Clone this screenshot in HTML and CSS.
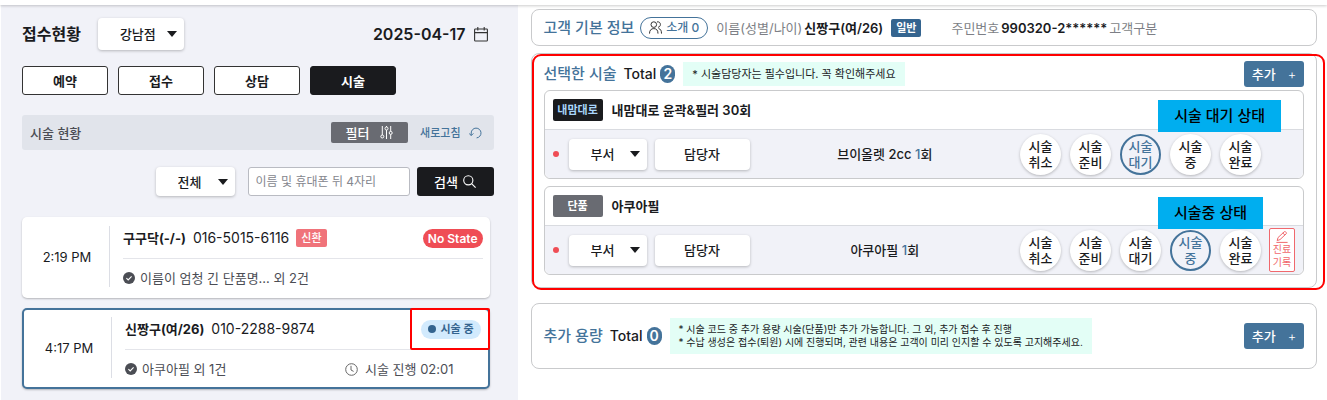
FILE: index.html
```html
<!DOCTYPE html>
<html lang="ko">
<head>
  <meta charset="UTF-8">
  <meta name="viewport" content="width=device-width, initial-scale=1.0">
  <title>접수현황</title>
  <link rel="stylesheet" href="styles.css">
</head>
<body>
  <header class="top-bar"></header>
  <main class="page">
    <aside class="reception">
      <div class="reception-head">
        <h1>접수현황</h1>
        <div class="select-box branch">
          <select aria-label="지점"><option>강남점</option></select>
        </div>
        <button class="date" type="button">
          <span>2025-04-17</span>
          <svg width="14" height="15" viewBox="0 0 14 15" fill="none" stroke="#333" stroke-width="1.1"><rect x="0.6" y="2" width="12.8" height="12" rx="0.8"/><path d="M0.6 5.6h12.8M3.8 0v3.6M10.2 0v3.6"/></svg>
        </button>
      </div>

      <nav class="tabs">
        <button type="button">예약</button>
        <button type="button">접수</button>
        <button type="button">상담</button>
        <button type="button" class="active">시술</button>
      </nav>

      <div class="status-bar">
        <h2>시술 현황</h2>
        <button class="filter" type="button">필터
          <svg width="13" height="13" viewBox="0 0 13 13" fill="none" stroke="#fff" stroke-width="1"><path d="M2.3 0v9M6.5 4v9M10.7 0v5.4M10.7 8.4v4.6M6.5 0v1"/><circle cx="2.3" cy="10.5" r="1.5"/><circle cx="6.5" cy="2.5" r="1.5"/><circle cx="10.7" cy="6.9" r="1.5"/></svg>
        </button>
        <button class="refresh" type="button">새로고침
          <svg width="13" height="12" viewBox="0 0 13 12" fill="none" stroke="#44739a" stroke-width="1"><path d="M2.2 8.4V6a4.9 4.9 0 1 1 5.4 4.9M0.2 6.4l2 2.2 2.2-2.2"/></svg>
        </button>
      </div>

      <form class="search">
        <div class="select-box kind">
          <select aria-label="구분"><option>전체</option></select>
        </div>
        <input type="text" aria-label="검색어" placeholder="이름 및 휴대폰 뒤 4자리">
        <button type="button">검색
          <svg width="13" height="13" viewBox="0 0 13 13" fill="none" stroke="#fff" stroke-width="1.1"><circle cx="5.3" cy="5.3" r="4.6"/><path d="M8.6 8.6l4 4"/></svg>
        </button>
      </form>

      <ul class="patients">
        <li class="patient">
          <time>2:19 PM</time>
          <div class="patient-body">
            <div class="patient-top">
              <strong>구구닥(-/-)</strong>
              <span class="phone">016-5015-6116</span>
              <em class="new">신환</em>
              <span class="state none">No State</span>
            </div>
            <div class="patient-bottom">
              <svg width="12" height="12" viewBox="0 0 12 12"><circle cx="6" cy="6" r="6" fill="#4b4d54"/><path d="M3.4 6.1l1.8 1.8 3.4-3.5" fill="none" stroke="#fff" stroke-width="1.1"/></svg>
              <span>이름이 엄청 긴 단품명... 외 2건</span>
            </div>
          </div>
        </li>
        <li class="patient selected">
          <time>4:17 PM</time>
          <div class="patient-body">
            <div class="patient-top">
              <strong>신짱구(여/26)</strong>
              <span class="phone">010-2288-9874</span>
              <span class="state doing">시술 중</span>
            </div>
            <div class="patient-bottom">
              <svg width="12" height="12" viewBox="0 0 12 12"><circle cx="6" cy="6" r="6" fill="#4b4d54"/><path d="M3.4 6.1l1.8 1.8 3.4-3.5" fill="none" stroke="#fff" stroke-width="1.1"/></svg>
              <span>아쿠아필 외 1건</span>
              <span class="elapsed">
                <svg width="13" height="13" viewBox="0 0 13 13" fill="none" stroke="#666" stroke-width="1"><circle cx="6.5" cy="6.5" r="5.8"/><path d="M6 2.8v4.2l2.6 1.4"/></svg>
                시술 진행 02:01
              </span>
            </div>
          </div>
          <div class="mark mark-state"></div>
        </li>
      </ul>
    </aside>

    <div class="detail">
      <section class="card customer">
        <h2>고객 기본 정보</h2>
        <button class="intro" type="button">
          <svg width="13" height="13" viewBox="0 0 13 13" fill="none" stroke="#333" stroke-width="1"><circle cx="4.8" cy="3.6" r="2.8"/><path d="M0.5 12.6c0-3.6 1.8-5 4.3-5s4.2 1.4 4.2 5M8 0.9c2.2-.4 3.4.9 3.4 2.6 0 1.5-1 2.6-2.4 2.8M9.6 7.5c2 .6 2.9 2 2.9 5.1"/></svg>
          소개 0
        </button>
        <dl>
          <dt>이름(성별/나이)</dt>
          <dd>신짱구(여/26)</dd>
        </dl>
        <span class="grade">일반</span>
        <dl class="private">
          <dt>주민번호</dt>
          <dd>990320-2******</dd>
          <dt>고객구분</dt>
        </dl>
      </section>

      <section class="card treatments">
        <div class="card-head">
          <h2>선택한 시술</h2>
          <p class="total">Total <b>2</b></p>
          <p class="notice">* 시술담당자는 필수입니다. 꼭 확인해주세요</p>
          <button class="add" type="button">추가 <span>+</span></button>
        </div>

        <article class="treatment">
          <div class="treatment-head">
            <span class="tag dark">내맘대로</span>
            <h3>내맘대로 윤곽&amp;필러 30회</h3>
          </div>
          <div class="treatment-row">
            <i class="dot"></i>
            <div class="select-box dept">
              <select aria-label="부서"><option>부서</option></select>
            </div>
            <button class="manager" type="button">담당자</button>
            <p class="item">브이올렛 2cc <b>1</b>회</p>
            <div class="steps">
              <button type="button">시술<br>취소</button>
              <button type="button">시술<br>준비</button>
              <button type="button" class="on">시술<br>대기</button>
              <button type="button">시술<br>중</button>
              <button type="button">시술<br>완료</button>
            </div>
            <div class="record-slot"></div>
          </div>
          <div class="callout wait">시술 대기 상태</div>
        </article>

        <article class="treatment">
          <div class="treatment-head">
            <span class="tag gray">단품</span>
            <h3>아쿠아필</h3>
          </div>
          <div class="treatment-row">
            <i class="dot"></i>
            <div class="select-box dept">
              <select aria-label="부서"><option>부서</option></select>
            </div>
            <button class="manager" type="button">담당자</button>
            <p class="item">아쿠아필 <b>1</b>회</p>
            <div class="steps">
              <button type="button">시술<br>취소</button>
              <button type="button">시술<br>준비</button>
              <button type="button">시술<br>대기</button>
              <button type="button" class="on">시술<br>중</button>
              <button type="button">시술<br>완료</button>
            </div>
            <div class="record-slot">
              <button class="record" type="button">
                <svg width="12" height="12" viewBox="0 0 12 12" fill="none" stroke="#f0686d" stroke-width="1"><path d="M1.2 9.6l.8-3L8.2.8c.5-.4 1-.3 1.4 0l.6.7c.4.4.4.9 0 1.3L4 8.6zM6.8 2l2.2 2.2M0.4 11.4h11.2"/></svg>
                <span>진료<br>기록</span>
              </button>
            </div>
          </div>
          <div class="callout doing">시술중 상태</div>
        </article>
        <div class="mark mark-card"></div>
      </section>

      <section class="card extra">
        <h2>추가 용량</h2>
        <p class="total">Total <b>0</b></p>
        <p class="notice small">* 시술 코드 중 추가 용량 시술(단품)만 추가 가능합니다. 그 외, 추가 접수 후 진행<br>* 수납 생성은 접수(퇴원) 시에 진행되며, 관련 내용은 고객이 미리 인지할 수 있도록 고지해주세요.</p>
        <button class="add" type="button">추가 <span>+</span></button>
      </section>
    </div>
  </main>
</body>
</html>
```

FILE: styles.css
```css
* {
  box-sizing: border-box;
}
body {
  margin: 0;
  background: #fff;
  color: #1a1b1e;
  font-family: Inter, 'Noto Sans CJK KR', sans-serif;
  font-size: 13px;
  line-height: 18px;
}
h1, h2, h3, p, ul, dl, dd {
  margin: 0;
  padding: 0;
}
button, input, select {
  font: inherit;
  color: inherit;
}
button {
  display: flex;
  align-items: center;
  justify-content: center;
  padding: 0;
  border: 0;
  background: none;
  cursor: pointer;
}
svg {
  flex: none;
}
.top-bar {
  position: relative;
  height: 5px;
  background: #fff;
  box-shadow: 0 1px 3px rgba(0, 0, 0, 0.2);
}
.page {
  display: flex;
  min-height: calc(100vh - 5px);
}

/* shared select */
.select-box {
  position: relative;
}
.select-box select {
  width: 100%;
  height: 100%;
  appearance: none;
  border: 0;
  border-radius: 4px;
  background: #fff;
  box-shadow: 0 1px 3px rgba(0, 0, 0, 0.25);
  padding: 0 18px 0 22px;
  font-weight: 500;
}
.select-box::after {
  content: "";
  position: absolute;
  right: 7px;
  top: 50%;
  margin-top: -3px;
  border: 5px solid transparent;
  border-top: 6px solid #1a1b1e;
  border-bottom: 0;
  pointer-events: none;
}

/* left */
.reception {
  flex: 0 0 39%;
  padding: 13px 24px 0 21px;
  border-left: 1px solid #fff;
  background: #f1f2f8;
}
.reception-head {
  display: flex;
  align-items: center;
}
.reception-head h1 {
  font-size: 16px;
  font-weight: 700;
}
.branch {
  width: 86px;
  height: 32px;
  margin-left: 17px;
}
.date {
  gap: 8px;
  margin-left: auto;
  margin-right: 6px;
  font-size: 16px;
  font-weight: 600;
}
.tabs {
  display: flex;
  gap: 10px;
  margin-top: 16px;
}
.tabs button {
  width: 86px;
  height: 29px;
  border: 1px solid #333;
  border-radius: 3px;
  background: #fff;
  font-weight: 600;
}
.tabs .active {
  background: #1a1b1e;
  border-color: #1a1b1e;
  color: #fff;
}
.status-bar {
  display: flex;
  align-items: center;
  height: 35px;
  margin-top: 20px;
  padding: 0 12px 0 8px;
  border-radius: 3px;
  background: #e1e4eb;
}
.status-bar h2 {
  font-size: 13px;
  font-weight: 500;
  color: #4b4d54;
}
.filter {
  gap: 11px;
  width: 77px;
  height: 21px;
  margin-left: auto;
  border-radius: 2px;
  background: #696b72;
  color: #fff;
  font-weight: 500;
}
.refresh {
  gap: 8px;
  margin-left: 12px;
  color: #44739a;
  font-size: 11px;
  font-weight: 500;
}
.search {
  display: flex;
  justify-content: flex-end;
  margin-top: 17px;
}
.kind {
  width: 79px;
  height: 29px;
}
.search input {
  width: 162px;
  height: 29px;
  margin: 0 7px 0 13px;
  padding: 0 7px;
  border: 1px solid #b9bbc2;
  border-radius: 3px;
  background: #fff;
  font-size: 12px;
}
.search input::placeholder {
  color: #85878e;
}
.search button {
  gap: 5px;
  width: 77px;
  height: 29px;
  border-radius: 3px;
  background: #1a1b1e;
  color: #fff;
  font-weight: 500;
}
.patients {
  display: grid;
  gap: 10px;
  margin: 21px 4px 0 0;
  list-style: none;
}
.patient {
  position: relative;
  display: flex;
  padding: 9px 7px 11px 0;
  border-radius: 5px;
  background: #fff;
  box-shadow: 0 1px 2px rgba(0, 0, 0, 0.25);
}
.patient.selected {
  padding: 7px 7px 9px 0;
  border: 2px solid #44739a;
}
.patient time {
  display: flex;
  flex: 0 0 88px;
  align-items: center;
  justify-content: center;
  padding-left: 3px;
  border-right: 1px solid #dcdee5;
}
.patient-body {
  flex: 1;
  padding-left: 13px;
}
.patient-top {
  display: flex;
  align-items: center;
  gap: 7px;
  height: 33px;
  padding-bottom: 8px;
  border-bottom: 1px solid #e4e5ea;
}
.patient-top strong {
  font-weight: 700;
}
.phone {
  font-size: 14px;
}
.new {
  padding: 0 5px;
  border-radius: 2px;
  background: #f0737a;
  color: #fff;
  font-size: 11px;
  font-style: normal;
  font-weight: 500;
}
.state {
  margin-left: auto;
  border-radius: 10px;
  font-weight: 600;
  line-height: 19px;
}
.state.none {
  padding: 0 5px;
  background: #ef4d55;
  color: #fff;
  font-size: 12px;
}
.state.doing {
  padding: 0 7px;
  background: #d2eafd;
  color: #34648f;
  font-size: 11px;
}
.state.doing::before {
  content: "";
  display: inline-block;
  width: 8px;
  height: 8px;
  margin-right: 4px;
  border-radius: 50%;
  background: #34648f;
}
.patient-bottom {
  display: flex;
  align-items: center;
  gap: 5px;
  padding-top: 10px;
  color: #4b4d54;
}
.elapsed {
  display: flex;
  align-items: center;
  gap: 7px;
  margin-left: auto;
  margin-right: 27px;
}

/* right */
.detail {
  display: flex;
  flex: 1;
  flex-direction: column;
  min-width: 0;
  padding: 4px 10px 0 13px;
}
.card {
  position: relative;
  padding: 7px 12px 12px;
  border: 1px solid #c9cacc;
  border-radius: 8px;
  background: #fff;
}
.card h2 {
  color: #44739a;
  font-size: 15px;
  font-weight: 500;
}
.customer {
  display: flex;
  align-items: center;
  height: 37px;
  padding: 0 12px;
  white-space: nowrap;
}
.customer dl {
  display: flex;
  gap: 2px;
}
.customer dt {
  color: #7d7f86;
}
.customer dd {
  font-weight: 600;
}
.intro {
  gap: 4px;
  height: 22px;
  margin: 0 8px 0 6px;
  padding: 0 8px;
  border: 1px solid #44739a;
  border-radius: 11px;
  color: #44739a;
  font-size: 12px;
  font-weight: 500;
}
.grade {
  margin-left: 8px;
  padding: 0 5px;
  border-radius: 2px;
  background: #34648f;
  color: #fff;
  font-size: 11px;
  font-weight: 600;
}
.customer .private {
  margin-left: 30px;
}
.treatments {
  margin-top: 7px;
}
.card-head, .extra {
  display: flex;
  align-items: center;
}
.total {
  display: flex;
  align-items: center;
  gap: 4px;
  margin: 0 8px 0 7px;
  font-size: 14px;
  font-weight: 500;
}
.total b {
  width: 15px;
  border-radius: 9px;
  background: #44739a;
  color: #fff;
  font-weight: 600;
  text-align: center;
}
.notice {
  padding: 3px 9px;
  background: #e3fef6;
  font-size: 11px;
}
.notice.small {
  padding: 5px 9px;
  font-size: 10px;
  line-height: 13px;
}
.add {
  gap: 12px;
  width: 60px;
  height: 26px;
  margin-left: auto;
  border-radius: 3px;
  background: #44739a;
  color: #fff;
  font-weight: 500;
}
.add span {
  font-weight: 300;
}
.treatment {
  position: relative;
  margin-top: 7px;
  border: 1px solid #c9cacc;
  border-radius: 6px;
}
.card-head + .treatment {
  margin-top: 3px;
}
.treatment-head {
  display: flex;
  align-items: center;
  gap: 9px;
  height: 39px;
  padding: 0 8px;
  border-bottom: 1px solid #d9dbe0;
}
.treatment-head h3 {
  font-size: 13px;
  font-weight: 600;
}
.tag {
  width: 50px;
  border-radius: 2px;
  color: #fff;
  font-size: 11px;
  font-weight: 600;
  line-height: 22px;
  text-align: center;
}
.tag.dark {
  background: #1a1b1e;
  color: #a9d6fb;
}
.tag.gray {
  background: #696b72;
}
.treatment-row {
  display: flex;
  align-items: center;
  gap: 8px;
  height: 48px;
  padding: 0 8px;
  border-radius: 0 0 6px 6px;
  background: #f1f2f8;
}
.dot {
  width: 6px;
  height: 6px;
  margin-right: 2px;
  border-radius: 50%;
  background: #ef4d55;
}
.dept {
  width: 78px;
  height: 31px;
}
.manager {
  width: 95px;
  height: 31px;
  border-radius: 4px;
  background: #fff;
  box-shadow: 0 1px 3px rgba(0, 0, 0, 0.25);
  font-weight: 500;
}
.item {
  flex: 1;
  font-weight: 500;
  text-align: center;
}
.item b {
  color: #44739a;
  font-weight: 500;
}
.steps {
  display: flex;
  gap: 9px;
}
.steps button {
  width: 41px;
  height: 41px;
  border-radius: 50%;
  background: #fff;
  box-shadow: 0 1px 3px rgba(0, 0, 0, 0.25);
  font-weight: 500;
  line-height: 16px;
}
.steps .on {
  border: 2px solid #44739a;
  background: #f1f2f8;
  color: #44739a;
  box-shadow: none;
}
.record-slot {
  width: 26px;
}
.record {
  flex-direction: column;
  width: 26px;
  height: 44px;
  border: 1px solid #f0686d;
  border-radius: 2px;
  background: #fff;
  color: #f0686d;
  font-size: 10px;
  line-height: 13px;
}
.extra {
  margin-top: 15px;
  padding: 14px 12px;
}

/* notes laid over the screen */
.mark {
  position: absolute;
  border: 2px solid #f00;
  pointer-events: none;
}
.mark-state {
  top: -2px;
  right: -2px;
  width: 80px;
  height: 42px;
  border-radius: 2px;
}
.mark-card {
  inset: 0 -9px -3px 0;
  border-radius: 9px;
}
.callout {
  position: absolute;
  padding: 7px 16px;
  background: #00aeef;
  color: #000;
  font-size: 15px;
  font-weight: 500;
}
.callout.wait {
  top: 9px;
  right: 22px;
}
.callout.doing {
  top: 10px;
  right: 40px;
}
```
